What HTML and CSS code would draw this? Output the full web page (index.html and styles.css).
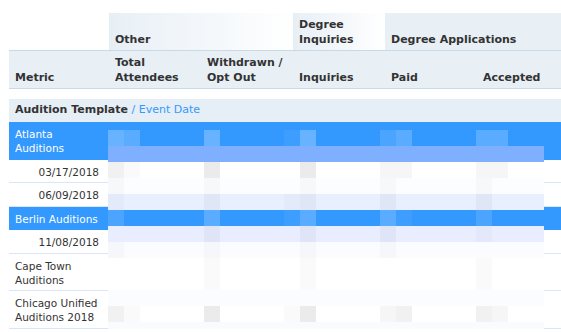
FILE: index.html
```html
<!DOCTYPE html>
<html lang="en">
<head>
    <meta charset="UTF-8">
    <meta name="viewport" content="width=device-width, initial-scale=1.0">
    <title>Audition Metrics</title>
    <link rel="stylesheet" href="styles.css">
</head>
<body>
    <div class="report">
        <table class="grid">
            <colgroup>
                <col class="col-metric">
                <col class="col-num">
                <col class="col-num">
                <col class="col-num">
                <col class="col-num">
                <col class="col-last">
            </colgroup>
            <thead>
                <tr class="groups">
                    <th class="blank"></th>
                    <th colspan="2" class="fade">Other</th>
                    <th class="fade">Degree Inquiries</th>
                    <th colspan="2" class="solid">Degree Applications</th>
                </tr>
                <tr class="fields">
                    <th>Metric</th>
                    <th>Total Attendees</th>
                    <th>Withdrawn / Opt Out</th>
                    <th>Inquiries</th>
                    <th>Paid</th>
                    <th>Accepted</th>
                </tr>
            </thead>
            <tbody>
                <tr class="spacer"><td colspan="6"></td></tr>
                <tr class="section">
                    <td colspan="6"><b>Audition Template</b> <span class="sub">/ Event Date</span></td>
                </tr>
                <tr class="template">
                    <td>Atlanta Auditions</td><td></td><td></td><td></td><td></td><td></td>
                </tr>
                <tr class="event">
                    <td class="date">03/17/2018</td><td></td><td></td><td></td><td></td><td></td>
                </tr>
                <tr class="event">
                    <td class="date">06/09/2018</td><td></td><td></td><td></td><td></td><td></td>
                </tr>
                <tr class="template">
                    <td>Berlin Auditions</td><td></td><td></td><td></td><td></td><td></td>
                </tr>
                <tr class="event">
                    <td class="date">11/08/2018</td><td></td><td></td><td></td><td></td><td></td>
                </tr>
                <tr class="event">
                    <td>Cape Town Auditions</td><td></td><td></td><td></td><td></td><td></td>
                </tr>
                <tr class="event">
                    <td>Chicago Unified Auditions 2018</td><td></td><td></td><td></td><td></td><td></td>
                </tr>
            </tbody>
        </table>

        <div class="mosaic" aria-hidden="true">
            <div class="m m0"><span class="ca w4"></span><span class="cb w3"></span><span class="cc w4"></span><span class="cd w1"></span><span class="ce w4"></span><span class="cf w2"></span><span class="cg w3"></span><span class="ch w3"></span><span class="ci w3"></span></div>
            <div class="m m1"></div>
            <div class="m m2"><span class="ca x3"></span><span class="cb x1"></span><span class="cc x4"></span><span class="ce x4"></span><span class="cf x2"></span><span class="cg x2"></span><span class="ch x2"></span><span class="ci x2"></span></div>
            <div class="m m3"><span class="ca x1"></span><span class="cc x1"></span><span class="ce x1"></span><span class="cf x1"></span><span class="ch x1"></span></div>
            <div class="m m4"><span class="ca x1"></span><span class="cc x2"></span><span class="cd x1"></span><span class="ce x2"></span><span class="cf x2"></span><span class="ch x2"></span></div>
            <div class="m m5"><span class="ca w2"></span><span class="cc w3"></span><span class="cd w1"></span><span class="ce w3"></span><span class="cf w3"></span><span class="cg w1"></span><span class="ch w2"></span></div>
            <div class="m m6"><span class="cc x2"></span><span class="ce x2"></span><span class="cf x2"></span><span class="ch x1"></span></div>
            <div class="m m7"><span class="ca x1"></span><span class="cc x1"></span><span class="ce x1"></span><span class="cf x1"></span></div>
            <div class="m m8"><span class="cc x1"></span><span class="ce x1"></span><span class="ch x1"></span></div>
            <div class="m m9"><span class="cc x1"></span><span class="ce x1"></span><span class="ch x1"></span></div>
            <div class="m m10"></div>
            <div class="m m11"><span class="ca x3"></span><span class="cb x1"></span><span class="cc x4"></span><span class="cd x1"></span><span class="ce x4"></span><span class="cf x2"></span><span class="cg x3"></span><span class="ch x3"></span><span class="ci x2"></span></div>
            <div class="m m12"></div>
        </div>
    </div>
</body>
</html>
```

FILE: styles.css
```css
* {
    box-sizing: border-box;
}

html, body {
    overflow: hidden;
}

body {
    margin: 0;
    background: #fff;
    font-family: "DejaVu Sans", Verdana, sans-serif;
    font-size: 10.5px;
    color: #333;
}

.report {
    position: relative;
    width: 552px;
    margin: 13px 0 0 9px;
}

.grid {
    width: 552px;
    table-layout: fixed;
    border-collapse: separate;
    border-spacing: 0;
}

.col-metric { width: 100px; }
.col-num { width: 92px; }
.col-last { width: 84px; }

/* header */
.grid th {
    font-size: 11px;
    font-weight: bold;
    text-align: left;
    vertical-align: bottom;
    line-height: 15px;
    padding: 4px 6px 3px;
    color: #333;
}

.groups .fade {
    background: linear-gradient(to right, #e7eff6, #fff);
}

.groups .solid {
    background: #e8f0f6;
}

.fields th {
    background: #e8f0f6;
    border-top: 1px solid #c6dae8;
    border-bottom: 1px solid #c6dae8;
}

/* body rows */
.grid td {
    line-height: 14px;
    padding: 5px 6px 3.5px;
    border-bottom: 1px solid #dbe5fa;
    vertical-align: top;
}

.spacer td {
    height: 10px;
    padding: 0;
    border: none;
}

.section td {
    background: #e6eef6;
    font-size: 11px;
    padding: 4px 6px 5px;
    border: none;
}

.section b {
    color: #333;
}

.section .sub {
    color: #3399ff;
}

.template td {
    background: #3399ff;
    color: #fff;
    border-bottom-color: #3399ff;
}

.event td {
    background: #fff;
    color: #333;
}

.event .date {
    text-align: right;
    padding-right: 10px;
}

/* pixelated mask over the figures */
.mosaic {
    position: absolute;
    left: 99px;
    top: 117px;
    width: 436px;
    height: 202px;
    overflow: hidden;
}

.m {
    display: grid;
    grid-template-columns: repeat(27, 16px) 4px;
    height: 16px;
}

.m0, .m5 { background: #3399ff; }
.m1 { background: #7eb0ff; }
.m2, .m8, .m9, .m11 { background: #fff; }
.m3 { background: #fcfdff; }
.m4 { background: #e8efff; }
.m6 { background: #e8eeff; }
.m7 { background: #fbfcff; }
.m10 { background: #fafcff; }
.m12 { background: #f9fbff; }

.ca { grid-column: 1; }
.cb { grid-column: 2; }
.cc { grid-column: 7; }
.cd { grid-column: 12; }
.ce { grid-column: 13; }
.cf { grid-column: 18; }
.cg { grid-column: 19; }
.ch { grid-column: 24; }
.ci { grid-column: 25; }

.m span { grid-row: 1; }

.x1 { background: rgba(0, 0, 0, 0.02); }
.x2 { background: rgba(0, 0, 0, 0.035); }
.x3 { background: rgba(0, 0, 0, 0.055); }
.x4 { background: rgba(0, 0, 0, 0.08); }

.w1 { background: rgba(255, 255, 255, 0.05); }
.w2 { background: rgba(255, 255, 255, 0.12); }
.w3 { background: rgba(255, 255, 255, 0.19); }
.w4 { background: rgba(255, 255, 255, 0.26); }
```
